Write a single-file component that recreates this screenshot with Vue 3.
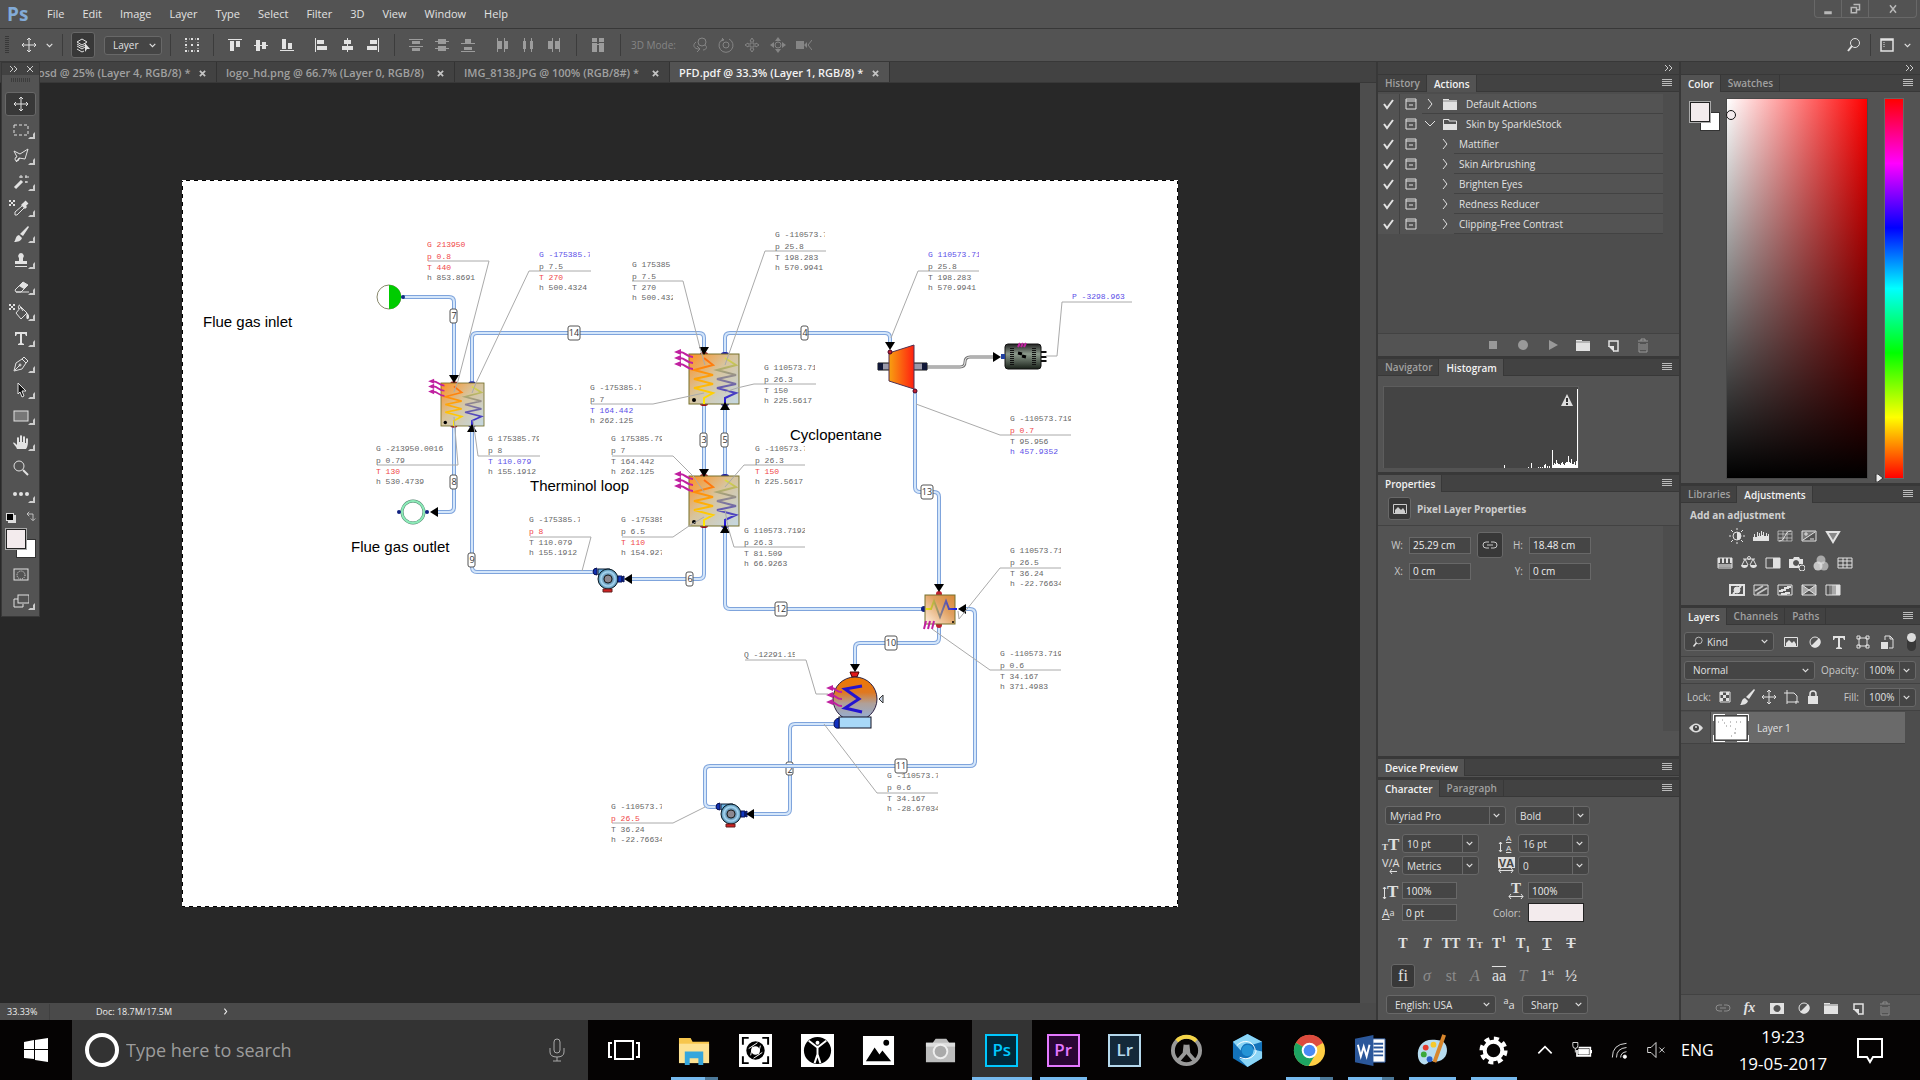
<script setup>
import { ref } from 'vue'

const menus = ['File', 'Edit', 'Image', 'Layer', 'Type', 'Select', 'Filter', '3D', 'View', 'Window', 'Help']

const docs = [
  { name: 'osd @ 25% (Layer 4, RGB/8) *', cls: 'd1' },
  { name: 'logo_hd.png @ 66.7% (Layer 0, RGB/8)', cls: 'd2' },
  { name: 'IMG_8138.JPG @ 100% (RGB/8#) *', cls: 'd3' },
  { name: 'PFD.pdf @ 33.3% (Layer 1, RGB/8) *', cls: 'd4', active: true }
]

const F = 'fill="currentColor" stroke="none"'
const checker = `<path ${F} d="M0 0h2v2H0zM4 0h2v2H4zM2 2h2v2H2zM0 4h2v2H0zM4 4h2v2H4z"/>`
const I = {
  move: `<path d="M8 1v14M1 8h14M6 3l2-2 2 2M6 13l2 2 2-2M3 6L1 8l2 2M13 6l2 2-2 2"/>`,
  marquee: `<rect x="1" y="3" width="14" height="10" stroke-dasharray="3 2"/>`,
  lasso: `<path d="M1 3l6 3 8-5-3 10-6-1-3 4M1 3l3 6M4 9a2 2 0 1 0 2 2M3 14l4-4"/>`,
  wand: `<path stroke-width="3" d="M2 14l7-7"/><path d="M8 1v3M6 3h4M13 1v3M12 3h4M13 7v2M12 8h3"/>`,
  dropper: `<path stroke-width="3" d="M9 4l4 4"/><path stroke-width="4" d="M11 5l3-3"/><path d="M9 6l-7 6v3h2l7-7"/>`,
  brush: `<path ${F} d="M15 0l1 1-6 9-3-2zM6 9l3 3c-1 3-4 4-8 4 2-2 1-6 5-7z"/>`,
  stamp: `<path ${F} d="M8 1a3 3 0 0 1 2 5v3h4v3H2V9h4V6a3 3 0 0 1 2-5zM2 14h12v1H2z"/>`,
  eraser: `<path d="M2 12l8-8 5 3-7 7H3z"/><path ${F} d="M6 8l4-4 5 3-4 4z"/><path d="M3 14h13"/>`,
  bucket: `<path d="M3 9l5-6 6 6-6 6zM7 2l3 5M7 1c-2 0-2 3-1 4"/><path ${F} d="M14 9c2 1 3 5 1 6s-2-3-1-6z"/>`,
  type: `<path ${F} d="M2 2h12v4h-1l-1-2H9v9l2 1v1H5v-1l2-1V4H4L3 6H2z"/>`,
  pen: `<path d="M1 15l2-8 6-4 4 4-4 6zM2 14l5-5M9 3l2-2 4 4-2 2"/><circle cx="7" cy="9" r="1"/>`,
  arrow: `<path fill="#111" d="M5 1l8 8H9l2 5-2 1-2-5-2 2z"/>`,
  rect: `<rect x="1" y="3" width="14" height="10" fill="#777"/>`,
  hand: `<path ${F} d="M4 15c-1-3-3-4-4-6 1-1 2 0 4 2V4c0-1 2-1 2 0v4h1V2c0-1 2-1 2 0v6h1V3c0-1 2-1 2 0v6h1V5c0-1 2-1 2 0-0 5 0 7-2 10z"/>`,
  zoom: `<circle cx="6" cy="6" r="5"/><path stroke-width="2" d="M10 10l5 5"/>`,
  dots: `<g ${F}><circle cx="2" cy="8" r="2"/><circle cx="8" cy="8" r="2"/><circle cx="14" cy="8" r="2"/></g>`,
  mask: `<rect x="1" y="2" width="14" height="11"/><circle cx="8" cy="8" r="4" stroke-dasharray="1 1"/>`,
  screen: `<path d="M5 6H1v8h9v-3"/><rect x="5" y="2" width="11" height="8"/>`,
  check: `<path stroke-width="2" d="M3 8l3 4 6-8"/>`,
  dialog: `<path d="M3 3h10v10H3zM3 5h10M6 9h4"/>`,
  right: `<path d="M6 3l4 5-4 5"/>`,
  down: `<path d="M3 5l5 5 5-5"/>`,
  folder: `<path ${F} d="M1 3h6v1h8v10H1z"/><path stroke="#535353" d="M1 5h14" stroke-width="0.6"/>`,
  folderOpen: `<path d="M1.500 12V3.500H7V5h7.500v7"/><path ${F} d="M1 8h14v6H1z"/>`,
  stop: `<rect x="4" y="4" width="8" height="8" ${F}/>`,
  rec: `<circle cx="8" cy="8" r="5" ${F}/>`,
  play: `<path ${F} d="M4 3l9 5-9 5z"/>`,
  fresh: `<path stroke-width="1.500" d="M4 10V4h9v10H8"/><path ${F} d="M3 9h6v6z"/>`,
  trash: `<path d="M3 4h10M6 4V2h4v2M4 6v9h8V6M6 7v6M8 7v6M10 7v6"/>`,
  link: `<path d="M7 5H4a3 3 0 0 0 0 6h3M9 5h3a3 3 0 0 1 0 6H9M5 8h6"/>`,
  image: `<path d="M1.500 3.500h13v9h-13z"/><path ${F} d="M3 12V9l3-3 3 3 2-2 2 3v2z"/>`,
  half: `<circle cx="8" cy="8" r="5"/><path ${F} d="M12 4a5 5 0 0 1-8 8z"/>`,
  shape: `<path d="M4 4h8v8H4zM2 2h3v3H2zM11 2h3v3h-3zM2 11h3v3H2zM11 11h3v3h-3z"/>`,
  smart: `<path d="M6 6V2h5l3 3v9h-4M11 2v3h3"/><path ${F} d="M2 8h7v7H2z"/>`,
  pixels: `<path d="M3 3h10v10H3z"/><path ${F} d="M3 3h3v3H3zM9 3h3v3H9zM6 6h3v3H6zM3 9h3v3H3zM9 9h3v3H9z"/>`,
  artboard: `<path d="M4 1v14M1 4h10l3 3v6H4M13 12v3M14 13h2"/>`,
  lock: `<path stroke-width="1.500" d="M5 8V5a3 3 0 0 1 6 0v3"/><path ${F} d="M3 7h10v8H3z"/>`,
  maskAdd: `<path fill-rule="evenodd" ${F} d="M1 3h14v11H1zM8 5a3.500 3.500 0 1 0 .1 0z"/>`,
  search: `<circle cx="9" cy="6" r="4.500"/><path stroke-width="2" d="M6 9l-4 5"/>`,
  space: `<path stroke-width="1.500" d="M2 2h12v12H2zM2 3h12"/><path d="M5 5v6" stroke-dasharray="1 1"/>`,
  layers: `<path d="M7 2l5 3-5 3-5-3zM2 7l5 3 3-2M2 9l5 3 3-2M2 12l5 3 2-1"/><path ${F} d="M10 6l5 6h-3l-2 3z"/>`,
  transform: `<rect x="2" y="2" width="12" height="12" stroke-dasharray="1 2"/><path ${F} d="M1 1h2v2H1zM7 1h2v2H7zM13 1h2v2h-2zM1 7h2v2H1zM13 7h2v2h-2zM1 13h2v2H1zM7 13h2v2H7zM13 13h2v2h-2zM7 7h2v2H7z"/>`,
  alT: `<path ${F} d="M1 2h14v1H1zM3 4h4v10H3zM9 4h4v6H9z"/>`,
  alM: `<path ${F} d="M1 8h14v1H1zM3 3h4v11H3zM9 5h4v7H9z"/>`,
  alB: `<path ${F} d="M1 13h14v1H1zM3 2h4v10H3zM9 6h4v6H9z"/>`,
  alL: `<path ${F} d="M2 1h1v14H2zM4 3h7v4H4zM4 9h10v4H4z"/>`,
  alC: `<path ${F} d="M8 1h1v14H8zM5 3h7v4H5zM3 9h11v4H3z"/>`,
  alR: `<path ${F} d="M13 1h1v14h-1zM5 3h7v4H5zM2 9h10v4H2z"/>`,
  dT: `<path ${F} d="M1 2h14v1H1zM4 4h8v3H4zM1 9h14v1H1zM4 11h8v3H4z"/>`,
  dM: `<path ${F} d="M1 4h14v1H1zM4 2h8v5H4zM1 11h14v1H1zM4 9h8v5H4z"/>`,
  dB: `<path ${F} d="M1 6h14v1H1zM5 2h6v4H5zM1 14h14v1H1zM4 10h8v3H4z"/>`,
  dL: `<path ${F} d="M3 1h1v14H3zM4 4h4v8H4zM10 1h1v14h-1zM11 4h3v8h-3z"/>`,
  dC: `<path ${F} d="M4 1h1v14H4zM3 4h3v8H3zM11 1h1v14h-1zM10 4h3v8h-3z"/>`,
  dR: `<path ${F} d="M6 1h1v14H6zM2 4h4v8H2zM13 1h1v14h-1zM9 4h4v8H9z"/>`,
  auto: `<path ${F} d="M2 1h5v4H2zM9 1h5v4H9zM2 6h5v9H2zM9 6h5v9H9zM7 7h2v1H7z"/>`,
  orbit: `<circle cx="10" cy="5" r="4"/><path d="M4 5c-4 3-2 7 3 7M5 9l3 3-3 3M13 8c3 2 1 5-2 5"/>`,
  roll: `<circle cx="8" cy="8" r="3"/><path d="M5 2a7 7 0 1 0 6 0M4 1l2 2-3 1"/>`,
  slide: `<path d="M8 1l2 3H9v3h3V6l3 2-3 2V9H9v3h1l-2 3-2-3h1V9H4v1L1 8l3-2v1h3V4H6z"/>`,
  pan: `<circle cx="8" cy="8" r="3"/><path ${F} d="M8 0l3 4H5zM8 16l-3-4h6zM0 8l4-3v6zM16 8l-4 3V5z"/>`,
  cam: `<path ${F} d="M0 4h8v8H0zM8 8l3-3v6z"/><path d="M16 3l-4 5 4 5"/>`,
  sun: `<circle cx="8" cy="8" r="4"/><path ${F} d="M8 4a4 4 0 0 1 0 8z"/><path d="M8 0v2M8 14v2M0 8h2M14 8h2M2 2l2 2M12 12l2 2M14 2l-2 2M2 14l2-2"/>`,
  levels: `<path ${F} d="M0 13V9h1V6h1v3h2V4h1v4h1V5h1v3h1V3h1v4h1V4h1v4h2V5h1v3h1V6h1v7z"/>`,
  curves: `<path opacity=".6" d="M1 3h14v10H1zM6 3v10M10 3v10M1 6h14M1 10h14"/><path d="M2 13c7 0 5-10 12-10"/>`,
  expo: `<path d="M1 3h14v10H1z"/><path ${F} d="M1 3h14L1 13z" opacity=".25"/><path d="M3 6h4M5 4v4M9 11h4M2 12L14 4"/>`,
  vib: `<path stroke-width="2" fill="#888" d="M2 4h12L8 14z"/>`,
  hue: `<path d="M1 3h14v10H1z"/><path ${F} d="M1 3h2v5H1zM5 3h2v5H5zM9 3h2v5H9zM13 3h2v5h-2z"/><path ${F} opacity=".6" d="M1 9h14v3H1z"/>`,
  scale: `<path d="M2 4h12M4 4l-3 6M4 4l3 6M12 4l-3 6M12 4l3 6"/><circle cx="8" cy="3" r="1.500"/><path ${F} d="M0 10h7c0 4-7 4-7 0zM9 10h7c0 4-7 4-7 0z"/>`,
  bw: `<path d="M1 3h14v10H1z"/><path ${F} d="M8 3h7v10H8z"/>`,
  photo: `<path fill-rule="evenodd" ${F} d="M0 4h4l1-2h5l1 2h3v5h-4v4H0zM7 5a3 3 0 1 0 .1 0z"/><circle cx="13" cy="13" r="3"/>`,
  mixer: `<g ${F}><circle cx="8" cy="5" r="4.500" opacity=".6"/><circle cx="5" cy="11" r="4.500" opacity=".8"/><circle cx="11" cy="11" r="4.500" opacity=".6"/></g>`,
  lookup: `<path d="M1 3h14v10H1zM6 3v10M10 3v10M1 6h14M1 10h14"/>`,
  invert: `<path stroke-width="2" d="M1 3h14v10H1zM4 12l8-8"/><circle cx="8" cy="8" r="3" fill="currentColor"/>`,
  poster: `<path d="M1 3h14v10H1z"/><path stroke-width="2" opacity=".8" d="M2 9l8-5M4 12l10-6"/>`,
  thresh: `<path d="M1 3h14v10H1z"/><path stroke-width="2" d="M2 9h3V8h3V6h3V5h3M4 12h5v-1h4"/>`,
  select: `<path d="M1 3h14v10H1z"/><path ${F} d="M1 3l7 5-7 5zM15 3L8 8l7 5z" opacity=".6"/><path d="M1 3l14 10M15 3L1 13"/>`,
  grad: `<path d="M1 3h14v10H1z"/><path ${F} d="M11 3h4v10h-4z"/><path ${F} opacity=".6" d="M7 3h4v10H7z"/><path ${F} opacity=".3" d="M4 3h3v10H4z"/>`
}

const tools = ['move', 'marquee', 'lasso', 'wand', 'dropper', 'brush', 'stamp', 'eraser', 'bucket', 'type', 'pen', 'arrow', 'rect', 'hand', 'zoom', 'dots']

const actions = [
  { t: 'Default Actions', set: true, icon: 'folder', open: false },
  { t: 'Skin by SparkleStock', set: true, icon: 'folderOpen', open: true },
  { t: 'Mattifier' }, { t: 'Skin Airbrushing' }, { t: 'Brighten Eyes' },
  { t: 'Redness Reducer' }, { t: 'Clipping-Free Contrast' }
]

const adjustRows = [
  ['sun', 'levels', 'curves', 'expo', 'vib'],
  ['hue', 'scale', 'bw', 'photo', 'mixer', 'lookup'],
  ['invert', 'poster', 'thresh', 'select', 'grad']
]

const bars = [[121, 3], [145, 1], [148, 5], [155, 1], [157, 1], [159, 1], [161, 3], [162, 4], [164, 2], [166, 2], [169, 18], [170, 3], [171, 5], [172, 4], [173, 8], [174, 5], [175, 4], [176, 4], [177, 3], [178, 5], [179, 6], [180, 4], [181, 3], [182, 5], [183, 6], [184, 6], [185, 12], [186, 6], [187, 5], [188, 9], [189, 4], [190, 4], [191, 6], [192, 3], [193, 7], [194, 79]]

/* Diagram data, in sheet coordinates */
const pipes = [
  'M403 297H449Q454 297 454 302V377',
  'M454 426V507Q454 512 449 512H436',
  'M472 383V338Q472 333 477 333H699Q704 333 704 338V348',
  'M472 432V567Q472 572 477 572H595',
  'M704 526V574Q704 579 699 579H630',
  'M704 403V470', 'M725 476V409',
  'M725 354V338Q725 333 730 333H885Q890 333 890 338V344',
  'M915 392V487Q915 492 920 492H934Q939 492 939 497V585',
  'M725 532V604Q725 609 730 609H922',
  'M939 626V638Q939 643 934 643H860Q855 643 855 648V665',
  'M836 724H795Q790 724 790 729V809Q790 814 785 814H753'
]
const lastPipe = 'M965 609H970Q975 609 975 614V761Q975 766 970 766H710Q705 766 705 771V802Q705 807 710 807H718'
const tags = [['7', 454, 316], ['8', 454, 482], ['14', 574, 333], ['9', 472, 560], ['6', 690, 579], ['3', 704, 440], ['5', 725, 440], ['4', 805, 333], ['13', 927, 492], ['12', 781, 609], ['10', 891, 643]]
const exchangers = [[441, 383, 0.86], [689, 354, 1], [689, 476, 1]]
const heads = [[454, 383, 0], [430, 512, 90], [704, 355, 0], [472, 424, 180], [624, 579, 90], [704, 477, 0], [725, 402, 180], [725, 525, 180], [890, 350, 0], [1001, 357, 270], [939, 592, 0], [958, 609, 90], [855, 672, 0], [746, 814, 90]]
const k = 'k', r = 'r', b = 'b'
const readings = [
  { x: 427, y: 247, w: 70, rows: [['G 213950', r], ['p 0.8', r], ['T 440', r], ['h 853.8691', k]], line: '428,261 489,261 458,381 454,392' },
  { x: 539, y: 257, w: 51, rows: [['G -175385.7', b], ['p 7.5', k], ['T 270', r], ['h 500.4324', k]], line: '591,271 529,271 476,383 472,393' },
  { x: 632, y: 267, w: 41, rows: [['G 175385', k], ['p 7.5', k], ['T 270', k], ['h 500.432', k]], line: '632,281 683,281 700,348 705,365' },
  { x: 775, y: 237, w: 50, rows: [['G -110573.7', k], ['p 25.8', k], ['T 198.283', k], ['h 570.9941', k]], line: '826,251 765,251 725,365' },
  { x: 928, y: 257, w: 51, rows: [['G 110573.71', b], ['p 25.8', k], ['T 198.283', k], ['h 570.9941', k]], line: '979,271 918,271 891,338' },
  { x: 1072, y: 299, w: 62, rows: [['P -3298.963', b]], line: '1132,302 1062,302 1057,356 1046,356' },
  { x: 590, y: 390, w: 51, rows: [['G -175385.7', k], ['p 7', k], ['T 164.442', b], ['h 262.125', k]], line: '591,404 653,404 704,393' },
  { x: 764, y: 370, w: 51, rows: [['G 110573.71', k], ['p 26.3', k], ['T 150', k], ['h 225.5617', k]], line: '816,384 754,384 737,388 725,392' },
  { x: 488, y: 441, w: 51, rows: [['G 175385.79', k], ['p 8', k], ['T 110.079', b], ['h 155.1912', k]], line: '540,456 478,456 473,420' },
  { x: 376, y: 451, w: 70, rows: [['G -213950.0016', k], ['p 0.79', k], ['T 130', r], ['h 530.4739', k]], line: '377,465 458,465 454,417' },
  { x: 611, y: 441, w: 51, rows: [['G 175385.79', k], ['p 7', k], ['T 164.442', k], ['h 262.125', k]], line: '612,456 673,456 694,477 704,492' },
  { x: 755, y: 451, w: 50, rows: [['G -110573.7', k], ['p 26.3', k], ['T 150', r], ['h 225.5617', k]], line: '805,465 744,465 725,487' },
  { x: 529, y: 522, w: 51, rows: [['G -175385.7', k], ['p 8', r], ['T 110.079', k], ['h 155.1912', k]], line: '530,537 591,537 582,571' },
  { x: 621, y: 522, w: 41, rows: [['G -175385', k], ['p 6.5', k], ['T 110', r], ['h 154.927', k]], line: '622,537 673,537 689,526 704,517' },
  { x: 744, y: 533, w: 61, rows: [['G 110573.7192', k], ['p 26.3', k], ['T 81.509', k], ['h 66.9263', k]], line: '805,547 734,547 728,527 725,510' },
  { x: 1010, y: 421, w: 61, rows: [['G -110573.719', k], ['p 0.7', r], ['T 95.956', k], ['h 457.9352', b]], line: '1071,435 1000,435 916,404' },
  { x: 1010, y: 553, w: 51, rows: [['G 110573.71', k], ['p 26.5', k], ['T 36.24', k], ['h -22.76634', k]], line: '1061,568 1000,568 959,619 958,611' },
  { x: 1000, y: 656, w: 61, rows: [['G -110573.719', k], ['p 0.6', k], ['T 34.167', k], ['h 371.4983', k]], line: '1061,670 990,670 932,629' },
  { x: 744, y: 657, w: 51, rows: [['Q -12291.15', k]], line: '745,660 806,660 816,694 828,694' },
  { x: 887, y: 778, w: 51, rows: [['G -110573.7', k], ['p 0.6', k], ['T 34.167', k], ['h -28.67034', k]], line: '938,793 877,793 824,724' },
  { x: 611, y: 809, w: 51, rows: [['G -110573.7', k], ['p 26.5', r], ['T 36.24', k], ['h -22.76634', k]], line: '612,823 673,823 705,807' }
]
const rowY = [8, 20, 31, 41]
const captions = [['Flue gas inlet', 203, 327], ['Flue gas outlet', 351, 552], ['Therminol loop', 530, 491], ['Cyclopentane', 790, 440]]

const apps = [
  { n: 'Explorer', run: 'many', s: '<path fill="#f7c64c" d="M1 4h12l2 4h17v22H1z"/><path fill="#fde293" d="M1 10h31v20H1z"/><path fill="#35a6dd" d="M7 18h19v14h-5v-7h-9v7H7z"/>' },
  { n: 'Lens', s: '<path fill="#fff" d="M0 0h34v34H0z"/><circle cx="17" cy="17" r="7" fill="none" stroke="#000" stroke-width="5"/><path fill="none" stroke="#000" stroke-width="2" d="M10 4H4v7M24 4h6v7M4 23v7h6M30 23v7h-6"/><path stroke="#fff" d="M10 15l9-6M24 19l-9 6M12 22l2-9M22 12l-2 9"/>' },
  { n: 'Vitruvian', s: '<path fill="#fff" d="M0 0h34v34H0z"/><circle cx="17" cy="17" r="14"/><path fill="none" stroke="#fff" stroke-width="2" d="M8 7l9 7 9-7M17 12v9l-3 9M17 21l3 9"/><circle cx="17" cy="9" r="2" fill="#fff"/>' },
  { n: 'Pictures', s: '<path fill="#fff" d="M1 2h32v30H1z"/><path d="M4 28l9-14 5 7 3-4 9 11z"/><circle cx="25" cy="9" r="3"/>' },
  { n: 'Camera', s: '<path fill="#bdbdbd" d="M2 9h7l3-4h11l3 4h6v20H2z"/><path fill="#ddd" d="M2 9h30v4H2z"/><circle cx="17" cy="18" r="8" fill="#eee"/><circle cx="17" cy="18" r="6" fill="#aaa"/>' },
  { n: 'Photoshop', run: 'cur', t: 'Ps', c: '#00c8ff', bg: '#00283a' },
  { n: 'Premiere', run: 'one', t: 'Pr', c: '#e478ff', bg: '#2a0634' },
  { n: 'Lightroom', t: 'Lr', c: '#b5d8ec', bg: '#14293a' },
  { n: 'Overwatch', s: '<circle cx="17" cy="17" r="14" fill="none" stroke="#999" stroke-width="4"/><path fill="none" stroke="#f5d547" stroke-width="4" d="M7 7a14 14 0 0 1 20 0"/><path fill="none" stroke="#999" stroke-width="4" d="M8 28l7-8 1-9M26 28l-7-8-1-9"/>' },
  { n: 'Studio', s: '<path fill="#1372ba" d="M17 0l15 8v17l-15 9-15-9V8z"/><path fill="#8bd5f6" d="M17 0l15 8-10 3c-7-3-11 0-12 6L2 8zM32 25l-15 9-9-9c9 2 15-2 15-9l9 2z"/><circle cx="17" cy="17" r="6" fill="#2594d6"/><path fill="none" stroke="#fff" d="M6 12c8-8 18-4 19 5M9 24c9 4 16-1 17-7"/>' },
  { n: 'Chrome', run: 'many', s: '<circle cx="17" cy="17" r="16" fill="#ffce44"/><path fill="#dd4b3e" d="M17 17L3 9a16 16 0 0 1 28 0z"/><path fill="#1da462" d="M17 17L3 9a16 16 0 0 0 13 24l7-12z"/><circle cx="17" cy="17" r="8" fill="#fff"/><circle cx="17" cy="17" r="6" fill="#4a8af4"/>' },
  { n: 'Word', run: 'many', s: '<path fill="#fff" stroke="#2b579a" d="M17 5h15v24H17z"/><path stroke="#2b579a" stroke-width="2" d="M20 10h10M20 14h10M20 18h10M20 22h10"/><path fill="#2b579a" d="M1 5l19-4v32L1 29z"/><path fill="none" stroke="#fff" stroke-width="2" d="M4 11l3 12 3-10 3 10 3-12"/>' },
  { n: 'Paint', run: 'one', s: '<path fill="#b7dcf0" d="M17 6C6 6 1 14 2 23c1 8 7 10 10 7 3-4 6-1 11-2 9-2 11-12 7-18-2-3-7-4-13-4z"/><circle cx="10" cy="14" r="3" fill="#e23b2e"/><circle cx="8" cy="21" r="3" fill="#3aa93a"/><circle cx="18" cy="11" r="3" fill="#f6c92c"/><circle cx="14" cy="26" r="3" fill="#2a60c8"/><path stroke="#d8862c" stroke-width="4" d="M29 1L19 29"/>' },
  { n: 'Settings', run: 'one', s: '<circle cx="17" cy="17" r="9" fill="none" stroke="#fff" stroke-width="4"/><circle cx="17" cy="17" r="12" fill="none" stroke="#fff" stroke-width="5" stroke-dasharray="5 4.425"/>' }
]

const width = ref('25.29 cm'), height = ref('18.48 cm'), posX = ref('0 cm'), posY = ref('0 cm')
const vscale = ref('100%'), hscale = ref('100%'), shift = ref('0 pt')
</script>

<template>
  <div class="app">
    <header class="menubar">
      <span class="logo">Ps</span>
      <nav class="menus"><button v-for="m in menus" :key="m">{{ m }}</button></nav>
      <div class="winctl">
        <button aria-label="Minimize"><svg class="ic" viewBox="0 0 16 16"><path d="M3 11h10v4H3z" fill="currentColor" /></svg></button>
        <button aria-label="Restore"><svg class="ic" viewBox="0 0 16 16"><path d="M6 2h8v7h-3M3 6h7v7H3z" fill="none" stroke="currentColor" stroke-width="2" /></svg></button>
        <button aria-label="Close" class="wclose"><svg class="ic" viewBox="0 0 16 16"><path d="M4 3l8 10M12 3L4 13" stroke="currentColor" stroke-width="2" /></svg></button>
      </div>
    </header>

    <div class="options">
      <span class="grip"></span>
      <svg class="ic g mv" viewBox="0 0 16 16" v-html="I.move"></svg>
      <svg class="chev" viewBox="0 0 16 16" v-html="I.down"></svg>
      <i class="sep s9"></i>
      <button class="pressed auto" aria-label="Auto-select"><svg class="ic g" viewBox="0 0 16 16" v-html="I.layers"></svg></button>
      <span class="sel w58"><select aria-label="Auto-select target"><option>Layer</option></select><svg class="chev" viewBox="0 0 16 16" v-html="I.down"></svg></span>
      <i class="sep s8"></i>
      <div class="grp"><svg class="ic g" viewBox="0 0 16 16" v-html="I.transform"></svg></div>
      <i class="sep"></i>
      <div class="grp">
        <div class="sub"><svg v-for="n in ['alT', 'alM', 'alB']" :key="n" class="ic g" viewBox="0 0 16 16" v-html="I[n]"></svg></div>
        <div class="sub"><svg v-for="n in ['alL', 'alC', 'alR']" :key="n" class="ic g" viewBox="0 0 16 16" v-html="I[n]"></svg></div>
      </div>
      <i class="sep"></i>
      <div class="grp dim">
        <div class="sub"><svg v-for="n in ['dT', 'dM', 'dB']" :key="n" class="ic g" viewBox="0 0 16 16" v-html="I[n]"></svg></div>
        <div class="sub"><svg v-for="n in ['dL', 'dC', 'dR']" :key="n" class="ic g" viewBox="0 0 16 16" v-html="I[n]"></svg></div>
      </div>
      <i class="sep"></i>
      <div class="grp dim"><svg class="ic g" viewBox="0 0 16 16" v-html="I.auto"></svg></div>
      <i class="sep"></i>
      <div class="grp mode"><span>3D Mode:</span><div class="sub"><svg v-for="n in ['orbit', 'roll', 'slide', 'pan', 'cam']" :key="n" class="ic g" viewBox="0 0 16 16" v-html="I[n]"></svg></div></div>
      <div class="optright">
        <svg class="ic g" viewBox="0 0 16 16" v-html="I.search"></svg>
        <i class="sep"></i>
        <svg class="ic g" viewBox="0 0 16 16" v-html="I.space"></svg>
        <svg class="chev" viewBox="0 0 16 16" v-html="I.down"></svg>
      </div>
    </div>

    <main class="work">
      <section class="stage">
        <div class="doctabs">
          <button v-for="d in docs" :key="d.name" class="doctab" :class="[d.cls, { active: d.active }]"><span>{{ d.name }}</span><svg class="x" viewBox="0 0 8 8"><path d="M1 1l6 6M7 1L1 7" /></svg></button>
        </div>
        <div class="view">
          <div class="canvas">
            <svg class="sheet" viewBox="182 180 996 727" role="img" aria-label="Process flow diagram">
              <defs>
                <linearGradient id="hx" x1="0" y1="0" x2="1" y2="1"><stop offset="0" stop-color="#ff9020" /><stop offset=".45" stop-color="#d8c49c" /><stop offset="1" stop-color="#c4d8e4" /></linearGradient>
                <linearGradient id="hot" x1="0" y1="0" x2="0" y2="1"><stop offset="0" stop-color="#ff6a10" /><stop offset="1" stop-color="#ffee00" /></linearGradient>
                <linearGradient id="cold" x1="0" y1="0" x2="0" y2="1"><stop offset="0" stop-color="#dcdc40" /><stop offset=".45" stop-color="#888098" /><stop offset="1" stop-color="#1c10e0" /></linearGradient>
                <linearGradient id="turb"><stop offset="0" stop-color="#f8a010" /><stop offset="1" stop-color="#ff2010" /></linearGradient>
                <linearGradient id="gen" x1="0" y1="0" x2="0" y2="1"><stop offset="0" stop-color="#222" /><stop offset=".4" stop-color="#8c9a8c" /><stop offset="1" stop-color="#182018" /></linearGradient>
                <linearGradient id="cond" x1="0" y1="0" x2="0" y2="1"><stop offset="0" stop-color="#f07800" /><stop offset=".35" stop-color="#e07820" /><stop offset=".6" stop-color="#b0a098" /><stop offset="1" stop-color="#90b0dc" /></linearGradient>
                <radialGradient id="pump"><stop offset=".3" stop-color="#2b5878" /><stop offset=".7" stop-color="#a8d8f4" /><stop offset="1" stop-color="#3c7898" /></radialGradient>
                <linearGradient id="hxs" x1="0" y1="1" x2="1" y2="0"><stop offset="0" stop-color="#fff0e0" /><stop offset=".6" stop-color="#e0a060" /><stop offset="1" stop-color="#d88838" /></linearGradient>
                <linearGradient id="zig"><stop offset="0" stop-color="#f0e800" /><stop offset=".5" stop-color="#807890" /><stop offset="1" stop-color="#1010f0" /></linearGradient>
              </defs>
              <rect x="182" y="180" width="996" height="727" fill="#fff" />
              <g class="pipe"><template v-for="p in pipes" :key="p"><path class="po" :d="p" /><path class="pi" :d="p" /></template></g>
              <g class="tag"><g v-for="t in tags" :key="t[0]"><rect :x="t[1] - (t[0].length > 1 ? 6 : 4)" :y="t[2] - 7" :width="t[0].length > 1 ? 12 : 7" height="14" rx="2" /><text :x="t[1]" :y="t[2] + 3">{{ t[0] }}</text></g>
                <rect x="786" y="762" width="7" height="13" rx="2" /><text x="790" y="773">2</text></g>
              <g class="pipe"><path class="po" :d="lastPipe" /><path class="pi" :d="lastPipe" /></g>
              <g class="tag"><rect x="895" y="759" width="12" height="14" rx="2" /><text x="901" y="769">11</text></g>

              <path d="M927 367H960Q965 367 965 362Q965 357 970 357H995" fill="none" stroke="#777" stroke-width="3" />
              <path d="M927 367H960Q965 367 965 362Q965 357 970 357H995" fill="none" stroke="#eee" />

              <g v-for="(h, i) in exchangers" :key="i" :transform="`translate(${h[0]} ${h[1]}) scale(${h[2]})`">
                <path d="M11 0a4 2 0 0 1 8 0M11 50a4 2 0 0 0 8 0" fill="#a01020" /><path d="M32 0a4 2 0 0 1 8 0M32 50a4 2 0 0 0 8 0" fill="#1818a0" />
                <rect width="50" height="50" fill="url(#hx)" stroke="#77702c" />
                <polyline points="15,4 24,11 5,16 24,21 5,25 24,30 5,34 24,39 15,44 15,50" fill="none" stroke="url(#hot)" stroke-width="2" />
                <polyline points="36,4 47,11 28,16 47,21 28,25 47,30 28,34 47,39 36,44 36,50" fill="none" stroke="url(#cold)" stroke-width="2" />
                <circle cx="5" cy="46" r="2" />
                <g class="heat"><path v-for="y in [-2, 4, 10]" :key="y" :d="`M4 ${y + 5}C-3 ${y + 5} -3 ${y} -9 ${y}`" /><path v-for="y in [-2, 4, 10]" :key="'h' + y" class="hh" :d="`M-15 ${y}l7 -3v6z`" /></g>
              </g>

              <circle cx="389" cy="297" r="12" fill="#fff" stroke="#88886c" /><path d="M389 285a12 12 0 0 1 0 24z" fill="#00cc00" /><circle cx="403" cy="297" r="2" fill="#123080" />
              <circle cx="413" cy="512" r="11" fill="#fff" stroke="#50806c" stroke-width="3" /><circle cx="413" cy="512" r="11" fill="none" stroke="#8ceab8" stroke-width="2" /><circle cx="399" cy="512" r="2" fill="#102080" /><circle cx="427" cy="512" r="2" fill="#102080" />

              <g v-for="p in [[608, 579], [731, 814]]" :key="p[0]" :transform="`translate(${p[0]} ${p[1]})`">
                <path d="M-10 -10H2V-4H-10z" fill="#68b0e0" stroke="#0c2038" /><path d="M-15 -7q0 -4 4 -4v7q-4 0 -4 -3z" fill="#1030b0" stroke="#081050" />
                <circle r="10" fill="url(#pump)" stroke="#0c1c28" /><circle r="4" fill="#8c8890" stroke="#222" /><path d="M-5 10h9v3h-9z" fill="#d02020" stroke="#602020" /><path d="M10 -3h4v6h-4zM14 -2l2 -1v6l-2 -1z" fill="#1038c0" stroke="#081050" />
              </g>

              <path d="M878 363h49v7h-49z" fill="#99a" stroke="#111" /><path d="M878 363h5v7h-5zM922 363h5v7h-5z" fill="#111838" />
              <path d="M889 353L914 345V389L889 381z" fill="url(#turb)" stroke="#503050" /><circle cx="890" cy="352" r="2" fill="#c02030" stroke="#402" /><circle cx="915" cy="391" r="2" fill="#c02030" stroke="#402" />

              <rect x="1005" y="344" width="36" height="25" rx="3" fill="url(#gen)" stroke="#111" /><path d="M1012 348v18M1034 348v18" stroke="#111" stroke-width="4" stroke-dasharray="1 1" /><path d="M1018 347l2-4M1021 347l2-4M1024 347l2-4" stroke="#c020a0" stroke-width="2" /><path d="M1018 353l4 1M1022 356l4 1" stroke="#000" stroke-width="3" /><path d="M1001 354h4v5h-4z" fill="#2040a0" /><path d="M1041 352h4M1041 357h4M1041 361h4" stroke="#111" stroke-width="2" /><path d="M1045 351v2M1045 356v2M1045 360v2" stroke="#111" stroke-width="3" />

              <circle cx="939" cy="594" r="3" fill="#c02030" /><circle cx="939" cy="625" r="3" fill="#c02030" /><circle cx="924" cy="609" r="3" fill="#102080" /><rect x="925" y="595" width="30" height="29" fill="url(#hxs)" stroke="#77702c" />
              <polyline points="926,609 931,609 934,601 940,617 946,601 949,609 957,609" fill="none" stroke="url(#zig)" stroke-width="2" /><circle cx="953" cy="622" r="1" />
              <path d="M924 629l2-8M928 629l2-8M932 629l2-8" stroke="#c020a0" stroke-width="2" />

              <path d="M850 672h9l-2 5h-5z" fill="#e01818" stroke="#400" />
              <circle cx="855" cy="699" r="22" fill="url(#cond)" stroke="#2c2040" /><rect x="839" y="717" width="32" height="11" fill="#a8d8f8" stroke="#112" /><path d="M839 718q-5 1 -5 6t5 4z" fill="#1030c0" stroke="#081050" /><path d="M883 695v8l-4 -4z" fill="#ccd8e8" stroke="#333" />
              <path d="M862 686l-17 3 14 10-14 9 17 4" fill="none" stroke="#2414d0" stroke-width="3" />
              <g class="heat"><path v-for="y in [688, 695, 702]" :key="y" :d="`M842 ${y + 4}C835 ${y + 4} 837 ${y} 831 ${y}`" /><path v-for="y in [688, 695, 702]" :key="'c' + y" class="hh" :d="`M826 ${y}l7 -3v6z`" /></g>

              <path v-for="(a, i) in heads" :key="'a' + i" d="M0 0L-5 -8H5z" :transform="`translate(${a[0]} ${a[1]}) rotate(${a[2]})`" />

              <g v-for="(d, i) in readings" :key="'r' + i">
                <polyline class="lead" :points="d.line" />
                <svg :x="d.x" :y="d.y - 8" :width="d.w" height="46"><text v-for="(row, j) in d.rows" :key="j" class="rd" :class="row[1]" x="0" :y="rowY[j]">{{ row[0] }}</text></svg>
              </g>
              <text v-for="c in captions" :key="c[0]" class="cap" :x="c[1]" :y="c[2]">{{ c[0] }}</text>
              <rect x="182" y="180" width="996" height="727" fill="none" stroke="#000" stroke-width="2" /><rect x="182" y="180" width="996" height="727" fill="none" stroke="#fff" stroke-width="2" stroke-dasharray="4 4" />
            </svg>
          </div>
          <div class="vbar"></div>
        </div>
        <div class="status"><span class="pct">33.33%</span><span class="doc">Doc: 18.7M/17.5M</span><svg class="chev" viewBox="0 0 16 16" v-html="I.right"></svg></div>

        <aside class="tools">
          <div class="thead"><svg viewBox="0 0 8 6"><path d="M0 0l3 3-3 3M4 0l3 3-3 3" /></svg><svg viewBox="0 0 8 6"><path d="M1 0l6 6M7 0L1 6" /></svg></div>
          <div class="tgrip"></div>
          <button v-for="(t, i) in tools" :key="t" class="tool" :class="{ held: !i, more: i && t !== 'zoom' }" :aria-label="t"><svg class="ic g" viewBox="0 0 16 16" v-html="I[t]"></svg><svg v-if="t === 'dropper' || t === 'bucket'" class="chk" viewBox="0 0 6 6" v-html="checker"></svg></button>
          <div class="defs"><i></i><svg class="ic g" viewBox="0 0 16 16"><path d="M5 4h7v8M7 1L4 4l3 3M9 10l3 3 3-3" /></svg></div>
          <div class="swatch"><i></i><b></b></div>
          <button class="tool" aria-label="Quick mask"><svg class="ic g" viewBox="0 0 16 16" v-html="I.mask"></svg></button>
          <button class="tool more" aria-label="Screen mode"><svg class="ic g" viewBox="0 0 16 16" v-html="I.screen"></svg></button>
        </aside>
      </section>

      <section class="col c1">
        <div class="strip"><svg viewBox="0 0 8 6"><path d="M0 0l3 3-3 3M4 0l3 3-3 3" /></svg></div>
        <div class="panel actions">
          <div class="tabs"><button>History</button><button class="on">Actions</button><i class="burger"></i></div>
          <div class="alist">
            <ul>
              <li v-for="a in actions" :key="a.t">
                <span class="ck"><svg class="ic g" viewBox="0 0 16 16" v-html="I.check"></svg></span>
                <span class="dl"><svg class="ic g" viewBox="0 0 16 16" v-html="I.dialog"></svg></span>
                <span class="nm" :class="{ set: a.set, open: a.open }"><svg class="ic g thin" viewBox="0 0 16 16" v-html="a.open ? I.down : I.right"></svg><svg v-if="a.set" class="ic g fold" viewBox="0 0 16 16" v-html="I[a.icon]"></svg><span>{{ a.t }}</span></span>
              </li>
            </ul>
          </div>
          <div class="afoot"><button v-for="n in ['stop', 'rec', 'play', 'folder', 'fresh', 'trash']" :key="n" :class="n" :aria-label="n"><svg class="ic g" viewBox="0 0 16 16" v-html="I[n]"></svg></button></div>
        </div>
        <div class="panel histo">
          <div class="tabs"><button>Navigator</button><button class="on">Histogram</button><i class="burger"></i></div>
          <svg class="hist" viewBox="0 0 196 82"><rect x=".5" y=".5" width="195" height="82" fill="#444" stroke="#5d5d5d" /><rect v-for="v in bars" :key="v[0]" :x="v[0]" :y="82 - v[1]" width="1" :height="v[1]" fill="#fff" /><path d="M184 8l6 12h-12z" fill="#ddd" /><path d="M184 12v4M184 17v2" stroke="#333" stroke-width="2" /></svg>
        </div>
        <div class="panel props">
          <div class="tabs"><button class="on">Properties</button><i class="burger"></i></div>
          <div class="phead"><span class="pressed pic"><svg class="ic g" viewBox="0 0 16 16" v-html="I.image"></svg></span><b>Pixel Layer Properties</b></div>
          <div class="pwrap">
            <div class="pgrid">
              <label for="pw">W:</label><input id="pw" v-model="width"><button class="pressed lnk" aria-label="Link width and height"><svg class="ic g" viewBox="0 0 16 16" v-html="I.link"></svg></button><label for="ph">H:</label><input id="ph" v-model="height">
              <label for="px">X:</label><input id="px" v-model="posX"><span></span><label for="py">Y:</label><input id="py" v-model="posY">
            </div>
            <div class="pbar"></div>
          </div>
        </div>
        <div class="panel device"><div class="tabs"><button class="on">Device Preview</button><i class="burger"></i></div></div>
        <div class="panel chars">
          <div class="tabs"><button class="on">Character</button><button>Paragraph</button><i class="burger"></i></div>
          <div class="cbody">
            <div class="crow r1">
              <span class="sel split w121"><select aria-label="Font family"><option>Myriad Pro</option></select><svg class="chev" viewBox="0 0 16 16" v-html="I.down"></svg></span>
              <span class="sel split w75"><select aria-label="Font style"><option>Bold</option></select><svg class="chev" viewBox="0 0 16 16" v-html="I.down"></svg></span>
            </div>
            <div class="crow">
              <span class="lb sf"><small>T</small>T</span><span class="sel split w77"><select aria-label="Font size"><option>10 pt</option></select><svg class="chev" viewBox="0 0 16 16" v-html="I.down"></svg></span>
              <span class="lb two lead2"><svg viewBox="0 0 5 14"><path d="M2.500 2v10M1 4l1.500-2L4 4M1 10l1.500 2L4 10" /></svg><span><u>A</u><u>A</u></span></span><span class="sel split w71"><select aria-label="Leading"><option>16 pt</option></select><svg class="chev" viewBox="0 0 16 16" v-html="I.down"></svg></span>
            </div>
            <div class="crow tight">
              <span class="lb kern"><span>V/A</span><svg viewBox="0 0 16 5"><path d="M15 2.500H8M10 0L8 2.500 10 5" /></svg></span><span class="sel split w77"><select aria-label="Kerning"><option>Metrics</option></select><svg class="chev" viewBox="0 0 16 16" v-html="I.down"></svg></span>
              <span class="lb two kern track"><span>VA</span><svg viewBox="0 0 16 5"><path d="M1 2.500h14M3 0L1 2.500 3 5M13 0l2 2.500L13 5" /></svg></span><span class="sel split w71"><select aria-label="Tracking"><option>0</option></select><svg class="chev" viewBox="0 0 16 16" v-html="I.down"></svg></span>
            </div>
            <div class="crow r4">
              <span class="lb sf"><svg viewBox="0 0 5 14"><path d="M2.500 1v12M1 3l1.500-2L4 3M1 11l1.500 2L4 11" /></svg>T</span><input v-model="vscale" aria-label="Vertical scale">
              <span class="lb hs kern sf2"><span>T</span><svg viewBox="0 0 16 5"><path d="M1 2.500h14M3 0L1 2.500 3 5M13 0l2 2.500L13 5" /></svg></span><input v-model="hscale" aria-label="Horizontal scale">
            </div>
            <div class="crow r5">
              <span class="lb base"><u>A</u><sup>a</sup></span><input v-model="shift" aria-label="Baseline shift">
              <span class="clab">Color:</span><button class="cswatch" aria-label="Text color"></button>
            </div>
            <div class="glyphs">
              <button><b>T</b></button><button><i>T</i></button><button>TT</button><button>T<small>T</small></button><button>T<sup>1</sup></button><button>T<sub>1</sub></button><button><u>T</u></button><button><s>T</s></button>
            </div>
            <div class="glyphs ot">
              <button class="pressed">fi</button><button class="off"><i>σ</i></button><button class="off">st</button><button class="off"><i>A</i></button><button class="ov">aa</button><button class="off"><i>T</i></button><button>1<sup>st</sup></button><button>½</button>
            </div>
            <div class="crow r8">
              <span class="sel w110"><select aria-label="Language"><option>English: USA</option></select><svg class="chev" viewBox="0 0 16 16" v-html="I.down"></svg></span>
              <span class="aa"><sup>a</sup>a</span>
              <span class="sel w66"><select aria-label="Anti-aliasing"><option>Sharp</option></select><svg class="chev" viewBox="0 0 16 16" v-html="I.down"></svg></span>
            </div>
          </div>
        </div>
      </section>

      <section class="col c2">
        <div class="strip"><svg viewBox="0 0 8 6"><path d="M0 0l3 3-3 3M4 0l3 3-3 3" /></svg></div>
        <div class="panel color">
          <div class="tabs"><button class="on">Color</button><button>Swatches</button><i class="burger"></i></div>
          <div class="cpick"><div class="swatch"><i></i><b></b></div><div class="field"><i class="ring"></i></div><div class="hue"><svg class="mark" viewBox="0 0 8 8"><path d="M1 0h2l5 4-5 4H1z" /></svg></div></div>
        </div>
        <div class="panel adj">
          <div class="tabs"><button>Libraries</button><button class="on">Adjustments</button><i class="burger"></i></div>
          <b class="addlab">Add an adjustment</b>
          <div v-for="(row, i) in adjustRows" :key="i" class="arow"><button v-for="n in row" :key="n" :aria-label="n"><svg class="ic g" viewBox="0 0 16 16" v-html="I[n]"></svg></button></div>
        </div>
        <div class="panel layers">
          <div class="tabs"><button class="on">Layers</button><button>Channels</button><button>Paths</button><i class="burger"></i></div>
          <div class="lrow kind">
            <span class="sel w90 kindsel"><svg class="mag g" viewBox="0 0 16 16" v-html="I.search"></svg><select aria-label="Filter kind"><option>Kind</option></select><svg class="chev" viewBox="0 0 16 16" v-html="I.down"></svg></span>
            <div class="kicons"><svg v-for="n in ['image', 'half', 'type', 'shape', 'smart']" :key="n" class="ic g" viewBox="0 0 16 16" v-html="I[n]"></svg></div>
            <button class="toggle" aria-label="Filter on or off"><i></i></button>
          </div>
          <div class="lrow">
            <span class="sel w131"><select aria-label="Blend mode"><option>Normal</option></select><svg class="chev" viewBox="0 0 16 16" v-html="I.down"></svg></span>
            <label for="op">Opacity:</label><span class="sel split num"><select id="op"><option>100%</option></select><svg class="chev" viewBox="0 0 16 16" v-html="I.down"></svg></span>
          </div>
          <div class="lrow">
            <span class="lk">Lock:</span>
            <div class="lkicons"><svg v-for="n in ['pixels', 'brush', 'move', 'artboard', 'lock']" :key="n" class="ic g" viewBox="0 0 16 16" v-html="I[n]"></svg></div>
            <label for="fl">Fill:</label><span class="sel split num"><select id="fl"><option>100%</option></select><svg class="chev" viewBox="0 0 16 16" v-html="I.down"></svg></span>
          </div>
          <div class="llist">
            <div class="layer"><span class="eye"><svg viewBox="0 0 14 10"><path d="M0 5q7-9 14 0-7 9-14 0z" fill="#ddd" /><circle cx="7" cy="5" r="3" fill="#444" /><circle cx="7" cy="4" r="1" fill="#ddd" /></svg></span><div class="lname"><svg class="thumb" viewBox="0 0 36 28"><rect x="2" y="2" width="32" height="24" fill="#fff" stroke="#222" /><path d="M9 6h1M11 9h1M17 8h1M17 12h1M23 8h1M27 8h1M13 12h1M22 15h1M21 19h2M18 22h1M5 8h1" stroke="#888" stroke-width="1" /><path d="M.5 7V.5H12M24 .5h11.500V7M.5 21v6.500H12M24 27.500h11.500V21" fill="none" stroke="#fff" /></svg><span>Layer 1</span></div></div>
          </div>
          <div class="lfoot"><button class="off" aria-label="Link layers"><svg class="ic g" viewBox="0 0 16 16" v-html="I.link"></svg></button><button class="fx">fx</button><button v-for="n in ['maskAdd', 'half', 'folder', 'fresh']" :key="n" :aria-label="n"><svg class="ic g" viewBox="0 0 16 16" v-html="I[n]"></svg></button><button class="off" aria-label="Delete layer"><svg class="ic g" viewBox="0 0 16 16" v-html="I.trash"></svg></button></div>
        </div>
      </section>
    </main>

    <footer class="taskbar">
      <button class="start" aria-label="Start"><svg viewBox="0 0 24 24"><path d="M0 4l10-2v9H0zM11 2l13-2v11H11zM0 12h10v9L0 20zM11 12h13v12l-13-2z" fill="#fff" /></svg></button>
      <div class="cortana"><i></i><input type="text" placeholder="Type here to search" aria-label="Search"><svg viewBox="0 0 18 24"><rect x="6" y="1" width="6" height="14" rx="3" /><path d="M2 10v4q0 5 7 5t7-5v-4M9 19v4M5 23h8" /></svg></div>
      <button class="tview" aria-label="Task view"><svg viewBox="0 0 32 24"><path d="M7 3h18v18H7zM4 5H1v14h3M28 5h3v14h-3" /></svg></button>
      <div class="apps"><button v-for="a in apps" :key="a.n" :class="a.run" :aria-label="a.n"><span v-if="a.t" class="adobe" :style="{ color: a.c, background: a.bg }">{{ a.t }}</span><svg v-else viewBox="0 0 34 34" v-html="a.s"></svg></button></div>
      <div class="tray">
        <svg viewBox="0 0 24 24"><path d="M4 16l8-8 8 8" stroke-width="2" /></svg>
        <svg viewBox="0 0 24 24"><path d="M8 9h14v10H6v-7M23 12v4" stroke-width="2" /><path d="M8 11h12v6H8z" fill="#fff" /><path d="M1 3v4q0 3 3 3t3-3V3zM4 10v5" fill="#000" /></svg>
        <svg viewBox="0 0 24 24"><path d="M4 21Q4 5 21 4M9 21Q9 10 21 9M14 21q0-6 7-7" /><circle cx="19" cy="20" r="2" fill="#fff" /></svg>
        <svg viewBox="0 0 24 24"><path d="M2 9h4l6-6v18l-6-6H2zM16 9l6 6M22 9l-6 6" /></svg>
      </div>
      <span class="lang">ENG</span>
      <div class="clock"><span>19:23</span><span>19-05-2017</span></div>
      <svg class="note" viewBox="0 0 26 26"><path d="M1 1h24v18H16l-3 5-3-5H1z" /></svg>
    </footer>
  </div>
</template>

<style>
body { background: #282828; }
</style>

<style scoped>
* { box-sizing: border-box; }
button, input, select { font: inherit; color: inherit; background: none; border: 0; padding: 0; margin: 0; border-radius: 0; }
.app { height: 100vh; display: flex; flex-direction: column; overflow: hidden; background: #535353; color: #e2e2e2; font: 10px/16px "Open Sans", "Noto Sans", sans-serif; }
svg { display: block; flex: none; }
.ic { width: 16px; height: 16px; }
.g, .chev { fill: none; stroke: currentColor; stroke-width: 1; }
.chev { width: 9px; height: 9px; stroke-width: 2; }

.menubar { height: 28px; flex: none; display: flex; align-items: center; padding-left: 7px; font-size: 11px; }
.logo { width: 31px; font: bold 19px/26px "Open Sans", sans-serif; color: #82abd8; }
.menus { display: flex; flex: 1; }
.menus button { padding: 0 9px; }
.winctl { align-self: flex-start; display: flex; height: 18px; margin-right: 3px; border: 1px solid #686868; border-top: 0; border-radius: 0 0 4px 4px; color: #b8b8b8; }
.winctl button { width: 27px; border-right: 1px solid #686868; display: flex; align-items: center; justify-content: center; }
.winctl .ic { width: 12px; height: 12px; }
.winctl .wclose { width: 47px; border: 0; }

.options { height: 34px; flex: none; display: flex; align-items: center; border-top: 1px solid #383838; border-bottom: 1px solid #383838; padding: 0 8px 0 5px; }
.grip { width: 4px; height: 18px; background: repeating-linear-gradient(#383838 0 1px, transparent 1px 2px); }
.mv { margin: 0 8px 0 12px; }
.sep { width: 1px; height: 22px; background: #3c3c3c; flex: none; }
.s9 { margin: 0 8px; }
.s8 { margin-left: 8px; }
.pressed { background: #383838; border: 1px solid #686868; border-radius: 3px; display: flex; align-items: center; justify-content: center; }
.auto { width: 24px; height: 26px; margin-right: 9px; }
.grp { display: flex; align-items: center; gap: 18px; padding: 0 13px; }
.sub { display: flex; gap: 10px; }
.dim { color: #9c9c9c; padding: 0 14px 0 13px; }
.mode { color: #858585; padding-left: 10px; gap: 16px; }
.optright { margin-left: auto; display: flex; align-items: center; gap: 8px; }
.sel { position: relative; display: inline-flex; height: 19px; background: #454545; border: 1px solid #686868; border-radius: 3px; align-items: center; flex: none; }
.sel select { appearance: none; width: 100%; height: 100%; padding: 0 16px 0 8px; outline: 0; }
.sel .chev { position: absolute; right: 4px; top: 4px; pointer-events: none; }
.split select { padding-left: 4px; background: linear-gradient(#686868, #686868) right 15px top / 1px 100% no-repeat; }
.w58 { width: 58px; } .w121 { width: 121px; } .w75 { width: 75px; } .w77 { width: 77px; } .w71 { width: 71px; } .w110 { width: 110px; } .w66 { width: 66px; } .w90 { width: 90px; } .w131 { width: 131px; }

.work { flex: 1; min-height: 0; display: flex; background: #383838; gap: 2px; }
.stage { flex: 1; min-width: 0; display: flex; flex-direction: column; position: relative; }
.doctabs { height: 21px; flex: none; background: #424242; display: flex; border-bottom: 1px solid #383838; }
.doctab { display: flex; align-items: center; justify-content: space-between; padding: 2px 10px 0 9px; font-size: 11px; font-weight: 600; color: #a0a0a0; border-right: 1px solid #333; white-space: nowrap; }
.doctab.active { background: #535353; color: #f2f2f2; }
.d1 { width: 217px; padding-left: 38px; } .d2 { width: 238px; } .d3 { width: 215px; } .d4 { width: 220px; }
.x { width: 7px; height: 7px; stroke: #c4c4c4; stroke-width: 2; fill: none; }
.view { flex: 1; min-height: 0; display: flex; }
.canvas { flex: 1; min-width: 0; background: #282828; display: flex; align-items: center; justify-content: center; overflow: hidden; }
.vbar { width: 16px; background: #4d4d4d; }
.sheet { width: 996px; overflow: hidden; }
.status { height: 17px; flex: none; background: #4a4a4a; display: flex; align-items: center; font-size: 9px; color: #eee; }
.pct { width: 49px; padding-left: 7px; }
.doc { width: 172px; padding-left: 46px; border-left: 1px solid #404040; }

.po { fill: none; stroke: #7fa4dc; stroke-width: 4; }
.pi { fill: none; stroke: #d4e6fa; stroke-width: 2; }
.tag rect { fill: #fff; stroke: #555; }
.tag text { font: 9px "Open Sans", sans-serif; text-anchor: middle; fill: #333; }
.heat { fill: none; stroke: #c020a0; stroke-width: 2; }
.hh { fill: #c020a0; stroke: none; }
.lead { fill: none; stroke: #aaa; }
.rd { font: 8px "Liberation Mono", monospace; }
.rd.k { fill: #666; } .rd.r { fill: #f04848; } .rd.b { fill: #5c50e8; }
.cap { font: 15px "Liberation Sans", sans-serif; fill: #000; }

.tools { position: absolute; left: 1px; top: 0; width: 39px; background: #535353; border: 1px solid #383838; display: flex; flex-direction: column; align-items: center; padding-bottom: 2px; }
.thead { height: 12px; width: 100%; background: #424242; display: flex; align-items: center; justify-content: space-between; padding: 0 5px 0 8px; }
.thead svg, .strip svg { width: 8px; height: 6px; stroke: #ccc; fill: none; overflow: visible; }
.tgrip { width: 20px; height: 4px; margin: 3px 0 9px; background: repeating-linear-gradient(90deg, #3c3c3c 0 1px, transparent 1px 2px); }
.tool { position: relative; width: 31px; height: 24px; margin: 1px 0; display: flex; align-items: center; justify-content: center; border: 1px solid transparent; border-radius: 3px; }
.tool.held { background: #383838; border-color: #686868; }
.more::after { content: ""; position: absolute; right: 0; bottom: 2px; border: 2px solid transparent; border-right-color: #ccc; border-bottom-color: #ccc; width: 3px; height: 3px; }
.chk { position: absolute; left: 3px; top: 3px; width: 6px; height: 6px; }
.defs { height: 20px; width: 30px; display: flex; justify-content: space-between; align-items: center; }
.defs i { width: 8px; height: 8px; background: #000; border: 1px solid #ddd; box-shadow: 2px 2px 0 #ddd; }
.defs .ic { width: 12px; height: 12px; }
.swatch { width: 30px; height: 29px; margin: 2px 0 4px; position: relative; flex: none; }
.swatch i { position: absolute; left: 0; top: 0; width: 20px; height: 20px; background: #f3ebed; border: 1px solid #222; outline: 1px solid #aaa; z-index: 1; }
.swatch b { position: absolute; right: 0; bottom: 0; width: 20px; height: 19px; background: #fff; border: 1px solid #333; }

.col { display: flex; flex-direction: column; flex: none; gap: 3px; }
.c1 { width: 301px; } .c2 { width: 239px; }
.strip { height: 12px; background: #424242; display: flex; align-items: center; justify-content: flex-end; padding-right: 6px; margin-bottom: -2px; flex: none; }
.panel { background: #535353; display: flex; flex-direction: column; flex: none; }
.tabs { height: 17px; flex: none; background: #424242; display: flex; align-items: stretch; color: #a0a0a0; font-weight: 600; border-bottom: 1px solid #383838; }
.tabs button { padding: 0 6px 0 7px; border-right: 1px solid #383838; line-height: 16px; }
.tabs .on { background: #535353; color: #f2f2f2; margin-bottom: -1px; }
.burger { margin: 4px 7px 0 auto; width: 10px; height: 8px; background: repeating-linear-gradient(#bbb 0 1px, transparent 1px 2px); }

.actions { height: 281px; }
.alist { flex: 1; background: #4d4d4d; padding: 2px 16px 0 0; border-bottom: 1px solid #424242; }
.alist ul { list-style: none; margin: 0; padding: 0; }
.alist li { height: 20px; display: flex; background: #535353; }
.ck { width: 22px; padding: 2px 0 0 3px; border-right: 1px solid #424242; }
.dl { width: 22px; padding: 2px 0 0 3px; }
.nm { flex: 1; margin-left: 32px; border-bottom: 1px solid #424242; display: flex; align-items: center; }
.nm .thin { margin: 0 6px 0 -17px; }
.nm.set { margin-left: 0; } .nm.open { border-color: transparent; }
.nm.set .thin { margin: 0 4px 0 0; }
.nm .fold { margin-right: 8px; }
.afoot { height: 22px; display: flex; justify-content: flex-end; align-items: center; gap: 14px; padding-right: 28px; }
.stop, .rec, .play, .afoot .trash { color: #999; }
.histo { height: 113px; }
.hist { width: 196px; height: 82px; margin: 10px 0 0 5px; }
.props { height: 281px; }
.phead { height: 34px; flex: none; border-bottom: 1px solid #424242; display: flex; align-items: center; gap: 6px; padding-left: 10px; color: #ccc; }
.pic { width: 23px; height: 23px; }
.pwrap { flex: 1; display: flex; justify-content: space-between; padding-bottom: 25px; }
.pbar { width: 16px; background: #4d4d4d; }
.pgrid { display: grid; grid-template-columns: 15px 62px 26px 14px 62px; column-gap: 6px; padding: 6px 0 0 10px; grid-auto-rows: 26px; align-content: start; align-items: center; color: #c8c8c8; }
.pgrid label { text-align: right; }
input { outline: 0; }
.pgrid input, .crow input { height: 17px; background: #454545; border: 1px solid #686868; padding: 0 3px; color: #eee; min-width: 0; }
.lnk { height: 26px; }
.device { height: 18px; }
.chars { flex: 1; min-height: 0; }
.cbody { padding: 9px 0 0 4px; }
.crow { display: flex; align-items: center; height: 19px; margin-bottom: 3px; }
.r1 { padding-left: 3px; gap: 9px; margin-bottom: 9px; }
.lb { width: 20px; height: 18px; flex: none; display: flex; align-items: flex-end; color: #e0e0e0; }
.lb svg, .kern svg { width: 5px; height: 14px; stroke: currentColor; fill: none; }
.sf { font: bold 17px/17px "Liberation Serif", serif; }
.sf small { font-size: 9px; line-height: 12px; }
.two { margin-left: 19px; }
.lead2 { height: 20px; }
.lead2 span { display: flex; flex-direction: column; font: 8px/10px "Liberation Sans", sans-serif; margin-left: 3px; }
.kern { flex-direction: column; align-items: flex-start; font-size: 11px; line-height: 12px; }
.kern svg { width: 16px; height: 5px; }
.track span { background: #ddd; color: #444; font-weight: bold; padding: 0 1px; line-height: 11px; }
.r4 { margin-top: 6px; }
.crow input { width: 55px; }
.hs { margin-left: 51px; }
.sf2 span { font: bold 15px/12px "Liberation Serif", serif; padding-left: 3px; }
.base { font-size: 12px; line-height: 16px; }
.base sup { font-size: 9px; line-height: 18px; }
.clab { margin: 0 9px 0 36px; width: 26px; color: #c8c8c8; }
.cswatch { width: 56px; height: 19px; background: #f3ebed; border: 1px solid #222; }
.glyphs { display: flex; font: bold 14px/20px "Liberation Serif", serif; padding-left: 9px; margin-top: 10px; height: 24px; align-items: center; }
.glyphs button { width: 24px; text-align: center; white-space: nowrap; }
.glyphs small, .glyphs sup, .glyphs sub { font-size: 9px; line-height: 9px; }
.glyphs.ot { font-weight: normal; font-size: 16px; margin-top: 8px; }
.ot .pressed { height: 24px; }
.off { color: #8c8c8c; }
.ov { text-decoration: overline; }
.r8 { margin: 7px 0 0 4px; }
.aa { width: 26px; text-align: center; font-size: 11px; }
.aa sup { font-size: 9px; line-height: 9px; }

.color { height: 408px; }
.cpick { display: flex; padding: 6px 0 0 9px; }
.cpick .swatch { margin: 4px 6px 0 0; }
.field { width: 142px; height: 381px; border: 1px solid #484848; position: relative; background: linear-gradient(transparent, #000), linear-gradient(90deg, #fff, #f00); }
.ring { position: absolute; left: -1px; top: 11px; width: 10px; height: 10px; border: 1px solid #111; border-radius: 50%; background: #f3ebed; }
.hue { position: relative; width: 20px; height: 381px; margin-left: 16px; background: linear-gradient(#f00, #f0f 17%, #00f 34%, #0ff 50%, #0f0 67%, #ff0 84%, #f00); border: 1px solid #666; }
.mark { position: absolute; left: -10px; bottom: -4px; width: 8px; height: 8px; fill: #eee; stroke: #333; }
.adj { height: 119px; }
.addlab { color: #d0d0d0; padding: 4px 0 0 9px; height: 19px; }
.arow { display: flex; justify-content: center; gap: 8px; padding-right: 32px; height: 27px; align-items: center; }
.layers { flex: 1; min-height: 0; }
.lrow { height: 27px; flex: none; display: flex; align-items: center; padding: 0 4px 0 3px; border-bottom: 1px solid #424242; }
.kind { height: 32px; padding: 2px 4px 0 3px; }
.lrow label { margin: 0 5px 0 auto; color: #c8c8c8; }
.num { width: 52px; }
.kindsel .mag { width: 12px; height: 12px; margin-left: 7px; flex: none; }
.kindsel select { padding-left: 3px; }
.kicons { display: flex; gap: 8px; margin-left: 9px; }
.toggle { width: 9px; height: 18px; border-radius: 5px; background: #383838; margin-left: auto; display: flex; }
.toggle i { width: 9px; height: 9px; border-radius: 50%; background: #ddd; }
.lk { margin-left: 3px; width: 30px; color: #c8c8c8; }
.lkicons { display: flex; gap: 6px; }
.llist { flex: 1; background: #4d4d4d; padding: 1px 15px 0 0; }
.layer { display: flex; height: 32px; border-bottom: 1px solid #424242; }
.eye { width: 30px; background: #535353; border-right: 1px solid #424242; display: flex; align-items: center; justify-content: center; }
.eye svg { width: 14px; height: 10px; }
.lname { flex: 1; background: #6a6a6a; display: flex; align-items: center; gap: 8px; padding-left: 2px; }
.thumb { width: 36px; height: 28px; }
.lfoot { height: 26px; flex: none; border-top: 1px solid #424242; display: flex; align-items: center; justify-content: center; gap: 11px; padding-left: 6px; }
.fx { font: italic bold 14px/16px "Liberation Serif", serif; width: 16px; }

.taskbar { height: 60px; flex: none; background: #050303; display: flex; align-items: stretch; color: #fff; }
.start { width: 72px; display: flex; align-items: center; justify-content: center; }
.start svg { width: 24px; height: 24px; }
.cortana { width: 516px; background: #333; display: flex; align-items: center; padding: 0 22px 0 13px; }
.cortana i { width: 34px; height: 34px; border: 4px solid #fff; border-radius: 50%; }
.cortana input { flex: 1; min-width: 0; font-size: 18px; padding-left: 7px; }
.cortana input::placeholder { color: #9c9c9c; opacity: 1; }
.cortana svg { width: 18px; height: 24px; stroke: #aaa; fill: none; }
.tview { width: 72px; display: flex; align-items: center; justify-content: center; }
.tview svg { width: 32px; height: 24px; stroke: #fff; stroke-width: 2; fill: none; }
.apps { display: flex; width: 860px; margin-left: 4px; gap: 1px; }
.apps button { flex: 1; display: flex; align-items: center; justify-content: center; position: relative; }
.apps svg { width: 33px; height: 33px; }
.adobe { width: 33px; height: 33px; border: 2px solid; font: 600 17px/28px "Open Sans", sans-serif; text-align: center; }
.apps .cur { background: #333; }
.apps .one::after, .apps .many::after, .apps .cur::after { content: ""; position: absolute; left: 7px; right: 7px; bottom: 0; height: 3px; background: #76b9ed; }
.apps .many::after { background: linear-gradient(90deg, #76b9ed 34px, #4c7898 34px); }
.apps .cur::after { left: 0; right: 0; }
.tray { display: flex; align-items: center; gap: 13px; margin-left: 9px; }
.tray svg { width: 24px; height: 20px; stroke: #fff; fill: none; stroke-width: 1; }
.lang { align-self: center; margin-left: 13px; font-size: 16px; width: 38px; }
.clock { display: flex; flex-direction: column; text-align: center; width: 128px; font-size: 17px; line-height: 27px; padding-top: 3px; }
.note { width: 26px; height: 26px; margin: 18px 37px 0 auto; stroke: #fff; stroke-width: 2; fill: none; }
</style>
